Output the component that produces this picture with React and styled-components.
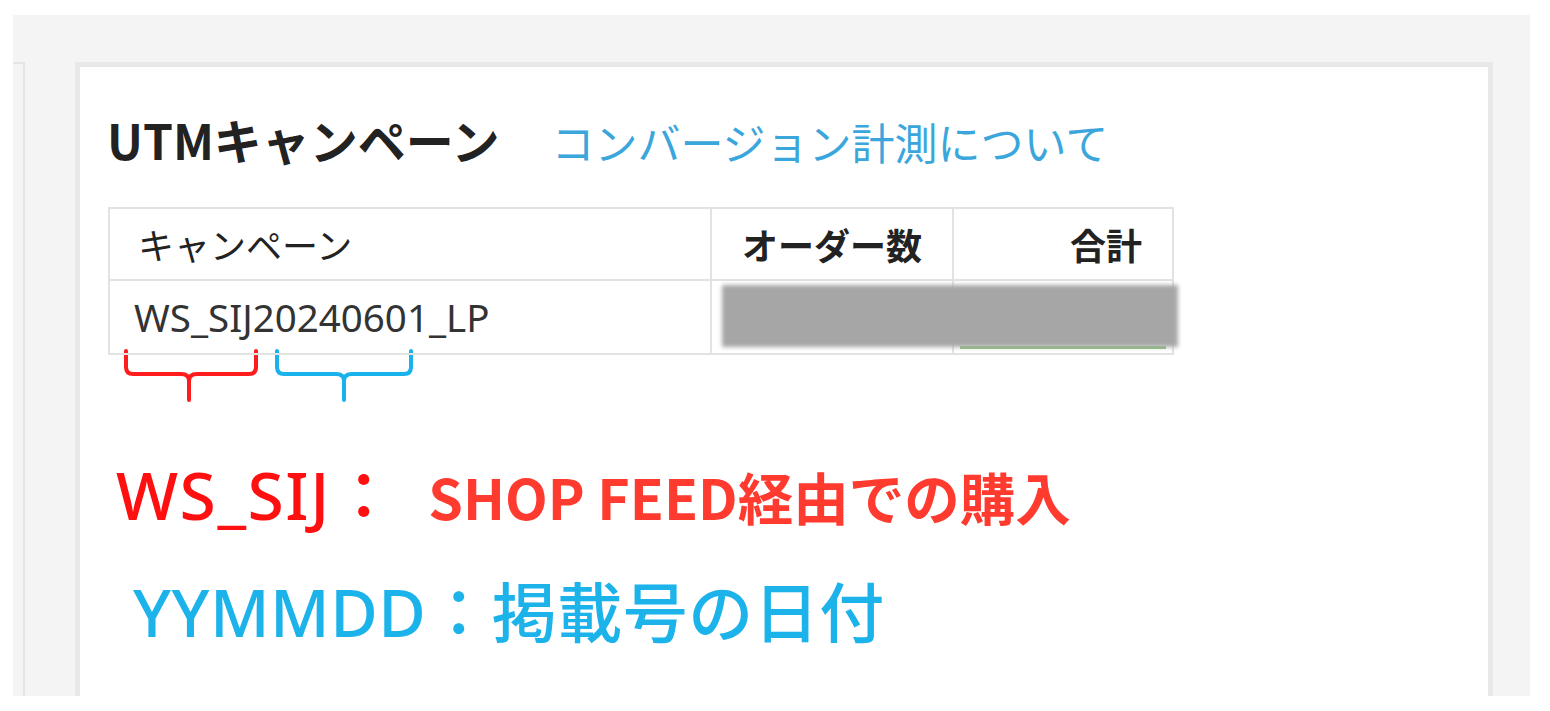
import React from "react";
import styled, { createGlobalStyle } from "styled-components";

const GlobalStyle = createGlobalStyle`
  html, body {
    margin: 0;
    padding: 0;
    background: #ffffff;
  }
  body {
    font-family: "Noto Sans", "Noto Sans CJK JP", sans-serif;
    color: #222;
  }
`;

const rows = [{ name: "WS_SIJ20240601_LP" }];

export default function App() {
  return (
    <>
      <GlobalStyle />
      <Frame>
        <LeftStub />
        <Panel>
          <TitleRow>
            <Title>UTMキャンペーン</Title>
            <HelpLink href="#">コンバージョン計測について</HelpLink>
          </TitleRow>

          <TableWrap>
            <Table>
              <colgroup>
                <col style={{ width: 602 }} />
                <col style={{ width: 242 }} />
                <col style={{ width: 220 }} />
              </colgroup>
              <thead>
                <tr>
                  <HeadCell>キャンペーン</HeadCell>
                  <HeadCell $right $bold>オーダー数</HeadCell>
                  <HeadCell $right $bold>合計</HeadCell>
                </tr>
              </thead>
              <tbody>
                {rows.map((r) => (
                  <tr key={r.name}>
                    <BodyCell>{r.name}</BodyCell>
                    <BodyCell $right />
                    <BodyCell $right>
                      <TotalBar />
                    </BodyCell>
                  </tr>
                ))}
              </tbody>
            </Table>
            <Redacted />
          </TableWrap>

          <Braces width="320" height="56" viewBox="0 0 320 56">
            <path
              d="M19 2 V18 Q19 25 26 25 H74 Q82 25 82 32 V51 M82 32 Q82 25 90 25 H142 Q149 25 149 18 V2"
              fill="none"
              stroke="#ff1c1c"
              strokeWidth="4"
              strokeLinecap="round"
              strokeLinejoin="round"
            />
            <path
              d="M170 2 V18 Q170 25 177 25 H229 Q237 25 237 32 V51 M237 32 Q237 25 245 25 H297 Q304 25 304 18 V2"
              fill="none"
              stroke="#19b2ea"
              strokeWidth="4"
              strokeLinecap="round"
              strokeLinejoin="round"
            />
          </Braces>

          <Notes>
            <NoteLine $indent={9}>
              <PrefixRed>WS_SIJ：</PrefixRed>
              <RedText>SHOP FEED経由での購入</RedText>
            </NoteLine>
            <NoteLine $indent={26}>
              <BlueText>YYMMDD：掲載号の日付</BlueText>
            </NoteLine>
          </Notes>
        </Panel>
      </Frame>
    </>
  );
}

const Frame = styled.div`
  margin: 15px 20px 0 13px;
  height: 681px;
  background: #f4f4f4;
  padding-top: 47px;
  box-sizing: border-box;
  display: flex;
  gap: 50px;
  overflow: hidden;
`;

const LeftStub = styled.div`
  width: 10px;
  flex: none;
  border-top: 2px solid #e6e6e6;
  border-right: 2px solid #e4e4e4;
`;

const Panel = styled.section`
  flex: none;
  width: 1418px;
  box-sizing: border-box;
  background: #fff;
  border: 5px solid #e8e8e8;
  border-bottom: none;
  padding: 0 0 0 27px;
`;

const TitleRow = styled.div`
  display: flex;
  align-items: baseline;
  gap: 52px;
  padding-top: 43px;
`;

const Title = styled.h2`
  margin: 0;
  font-family: "Noto Sans CJK JP", sans-serif;
  font-size: 48px;
  line-height: 56px;
  font-weight: 700;
  color: #222;
`;

const HelpLink = styled.a`
  font-family: "Noto Sans CJK JP", sans-serif;
  font-size: 43px;
  color: #3ba6dc;
  text-decoration: none;
`;

const TableWrap = styled.div`
  position: relative;
  width: 1064px;
  margin: 35px 0 0 1px;
`;

const Table = styled.table`
  width: 100%;
  table-layout: fixed;
  border-collapse: collapse;
  font-family: "Noto Sans CJK JP", sans-serif;
  tr:first-child th {
    height: 70px;
  }
  td {
    height: 72px;
  }
`;

const HeadCell = styled.th`
  border: 2px solid #e2e2e2;
  padding: 0 30px 0 28px;
  font-size: 36px;
  white-space: nowrap;
  font-weight: ${(p) => (p.$bold ? 700 : 400)};
  text-align: ${(p) => (p.$right ? "right" : "left")};
  color: #222;
`;

const BodyCell = styled.td`
  position: relative;
  border: 2px solid #e2e2e2;
  padding: 0 12px 0 24px;
  font-family: "Noto Sans", "Noto Sans CJK JP", sans-serif;
  font-size: 38.5px;
  color: #333;
  text-align: ${(p) => (p.$right ? "right" : "left")};
`;

const TotalBar = styled.div`
  position: absolute;
  left: 6px;
  right: 6px;
  bottom: 4px;
  height: 3px;
  background: #8cbf7c;
`;

const Redacted = styled.div`
  position: absolute;
  left: 614px;
  top: 78px;
  width: 456px;
  height: 62px;
  background: #a6a6a6;
  filter: blur(2px);
`;

const Braces = styled.svg`
  display: block;
  margin: -6px 0 0 0;
`;

const Notes = styled.div`
  display: flex;
  flex-direction: column;
  gap: 28px;
  margin-top: 45px;
`;

const NoteLine = styled.div`
  display: flex;
  align-items: baseline;
  margin-left: ${(p) => p.$indent}px;
  line-height: 88px;
`;

const PrefixRed = styled.span`
  font-family: "Noto Sans", "Noto Sans CJK JP", sans-serif;
  font-size: 66px;
  font-weight: 500;
  letter-spacing: 1.5px;
  color: #ff1010;
  margin-right: 30px;
`;

const RedText = styled.span`
  font-family: "Noto Sans CJK JP", sans-serif;
  font-size: 55.5px;
  font-weight: 700;
  color: #ff3b30;
`;

const BlueText = styled.span`
  font-family: "Noto Sans", "Noto Sans CJK JP", sans-serif;
  font-size: 65px;
  font-weight: 500;
  letter-spacing: 0.5px;
  color: #1cb3ea;
`;
